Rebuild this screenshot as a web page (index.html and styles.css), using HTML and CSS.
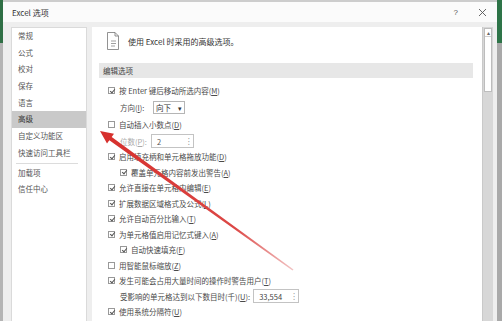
FILE: index.html
```html
<!DOCTYPE html>
<html lang="zh-CN">
<head>
  <meta charset="UTF-8">
  <title>Excel 选项</title>
  <link rel="stylesheet" href="styles.css">
</head>
<body>
  <div class="screen">
    <div class="edge-left"></div>
    <div class="dialog">
      <div class="titlebar">
        <span class="title">Excel 选项</span>
        <span class="help">?</span>
        <svg class="close" width="9" height="9" viewBox="0 0 9 9"><path d="M1 1L8 8M8 1L1 8" stroke="#555" stroke-width="0.9" fill="none"/></svg>
      </div>
      <div class="content">
        <ul class="nav">
          <li>常规</li>
          <li>公式</li>
          <li>校对</li>
          <li>保存</li>
          <li>语言</li>
          <li class="active">高级</li>
          <li>自定义功能区</li>
          <li>快速访问工具栏</li>
          <li class="sep"></li>
          <li>加载项</li>
          <li>信任中心</li>
        </ul>
        <div class="main">
          <div class="intro">
            <svg width="12" height="18" viewBox="0 0 12 18">
              <path d="M0.5 0.5H8L11.5 4V17.5H0.5Z" fill="#fff" stroke="#777" stroke-width="0.8"/>
              <path d="M8 0.5V4H11.5" fill="none" stroke="#777" stroke-width="0.8"/>
              <path d="M4 9H9M4 11.5H9M4 14H8" stroke="#888" stroke-width="0.8"/>
            </svg>
            <span>使用 Excel 时采用的高级选项。</span>
          </div>
          <div class="section">编辑选项</div>
          <div class="options">
            <div class="row tall"><i class="cb on"></i>按 Enter 键后移动所选内容(<u>M</u>)</div>
            <div class="row tall sub"><span class="label">方向(<u>I</u>):</span><span class="select">向下<b>▾</b></span></div>
            <div class="row tall"><i class="cb"></i>自动插入小数点(<u>D</u>)</div>
            <div class="row mid sub"><span class="label muted">位数(<u>P</u>):</span><span class="spin small">2<b>⁝</b></span></div>
            <div class="row"><i class="cb on"></i>启用填充柄和单元格拖放功能(<u>D</u>)</div>
            <div class="row sub2"><i class="cb on"></i>覆盖单元格内容前发出警告(<u>A</u>)</div>
            <div class="row"><i class="cb on"></i>允许直接在单元格内编辑(<u>E</u>)</div>
            <div class="row"><i class="cb on"></i>扩展数据区域格式及公式(<u>L</u>)</div>
            <div class="row"><i class="cb on"></i>允许自动百分比输入(<u>T</u>)</div>
            <div class="row"><i class="cb on"></i>为单元格值启用记忆式键入(<u>A</u>)</div>
            <div class="row sub2"><i class="cb on"></i>自动快速填充(<u>F</u>)</div>
            <div class="row"><i class="cb"></i>用智能鼠标缩放(<u>Z</u>)</div>
            <div class="row"><i class="cb on"></i>发生可能会占用大量时间的操作时警告用户(<u>T</u>)</div>
            <div class="row sub"><span>受影响的单元格达到以下数目时(千)(<u>U</u>):</span><span class="spin wide">33,554<b>⁝</b></span></div>
            <div class="row"><i class="cb on"></i>使用系统分隔符(<u>U</u>)</div>
          </div>
        </div>
        <div class="scrollbar">
          <div class="thumb"><span class="up">▴</span></div>
        </div>
      </div>
    </div>
    <div class="edge-right"></div>

    <svg class="arrow" width="502" height="321" viewBox="0 0 502 321">
      <defs>
        <linearGradient id="fade" gradientUnits="userSpaceOnUse" x1="100" y1="131" x2="293" y2="270">
          <stop offset="0" stop-color="#d62f2c"/>
          <stop offset="0.7" stop-color="#dc4846"/>
          <stop offset="1" stop-color="#f2c4c4"/>
        </linearGradient>
      </defs>
      <polygon points="293.5,269.4 111.7,137 114,133.7 100,131 107,143.5 109.3,140.2 292.5,270.6" fill="url(#fade)"/>
    </svg>
  </div>
</body>
</html>
```
FILE: styles.css
```css
* { box-sizing: border-box; }
body { margin: 0; background: #f0f0f0; font-family: "Noto Sans CJK SC", "Noto Sans", sans-serif; color: #4a4a4a; }
ul { list-style: none; margin: 0; padding: 0; }
u { text-decoration: underline; text-underline-offset: 1px; }

.screen { position: relative; width: 502px; height: 321px; display: flex; overflow: hidden; }
.edge-left { width: 3px; background: linear-gradient(#2f6f45 0, #2f6f45 43px, #b4b4b4 43px); }
.edge-right { width: 5px; background: linear-gradient(#2e7448 0, #2e7448 43px, #a9a9a9 43px); }

.dialog { flex: 1; display: flex; flex-direction: column; background: #eeeeee; }
.titlebar { height: 22px; display: flex; align-items: center; padding: 0 8px 0 9px; background: #fbfbfb; border-top: 2px solid #cdcdcd; font-size: 8px; color: #333; }
.title { flex: 1; }
.help { font-family: "Liberation Sans", sans-serif; font-size: 8px; color: #555; margin-right: 20px; }
.close { margin-right: 2px; }

.content { flex: 1; display: flex; padding: 5px 4px 0 8px; }

.nav { width: 76px; background: #fff; border: 1px solid #dadada; border-bottom: none; font-size: 7.5px; color: #555; }
.nav li { height: 16.7px; line-height: 16.7px; padding-left: 6px; }
.nav li.active { background: #c9c9c9; color: #333; }
.nav li.sep { height: 3px; margin: 0 8px 0 4px; background: linear-gradient(transparent 1px, #dcdcdc 1px, #dcdcdc 2px, transparent 2px); }

.main { width: 390px; margin-left: 5px; background: #fff; font-size: 7.5px; }
.intro { height: 36px; display: flex; align-items: flex-start; gap: 9px; padding: 5px 0 0 15px; font-size: 8px; color: #333; }
.intro span { line-height: 19px; }
.section { height: 15px; line-height: 15px; margin: 0 9px 0 7px; padding-left: 4px; background: #e7e7e7; color: #444; }

.options { padding-top: 4px; }
.row { height: 15.5px; display: flex; align-items: center; padding-left: 16px; white-space: nowrap; }
.row.tall { height: 17px; }
.row.mid { height: 16px; }
.row.sub { padding-left: 28px; }
.row.sub2 { padding-left: 28px; }
.muted { color: #aaa; }

.cb { display: inline-block; width: 7px; height: 7px; border: 1px solid #999; margin-right: 4px; background: #fff; position: relative; }
.cb.on::after { content: ""; position: absolute; left: 1.5px; top: -0.5px; width: 2px; height: 4px; border: solid #555; border-width: 0 1px 1px 0; transform: rotate(40deg); }

.label { width: 33px; }
.select { width: 32px; height: 13px; border: 1px solid #b5b5b5; display: flex; align-items: center; justify-content: space-between; padding: 0 2px; color: #333; }
.select b { font-weight: normal; font-size: 7px; }
.spin { height: 14px; border: 1px solid #c3c3c3; display: flex; align-items: center; justify-content: space-between; padding: 0 3px 0 5px; }
.spin b { font-weight: normal; font-size: 8px; color: #888; }
.spin.small { width: 43px; color: #555; margin-left: -2px; }
.spin.wide { width: 46px; margin-left: 3px; color: #444; }

.scrollbar { width: 11px; background: #d7d7d7; border-left: 1px solid #c9c9c9; padding: 1px 1px 0 1px; }
.thumb { height: 64px; background: #fff; border: 1px solid #bdbdbd; text-align: center; }
.up { display: block; font-size: 6px; line-height: 7px; color: #666; border-bottom: 1px solid #d0d0d0; }

.arrow { position: absolute; left: 0; top: 0; pointer-events: none; }
```
